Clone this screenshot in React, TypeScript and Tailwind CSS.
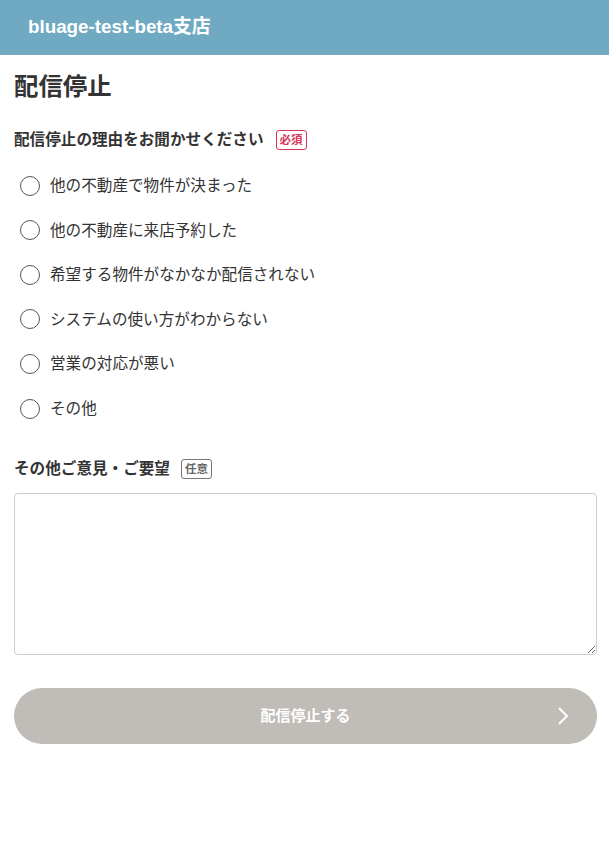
const reasons = [
  "他の不動産で物件が決まった",
  "他の不動産に来店予約した",
  "希望する物件がなかなか配信されない",
  "システムの使い方がわからない",
  "営業の対応が悪い",
  "その他",
];

export default function App() {
  return (
    <div className="min-h-screen bg-white text-[#333] font-['Liberation_Sans','Noto_Sans_CJK_JP',sans-serif]">
      {/* Header */}
      <header className="h-[55px] bg-[#6faac2] flex items-center px-[28px]">
        <h1 className="text-white font-bold text-[18.8px]">bluage-test-beta支店</h1>
      </header>

      <main className="pl-[14px] pr-[12px] pt-[16px]">
        <h2 className="text-[24.4px] font-bold leading-[32px]">配信停止</h2>

        {/* Reasons */}
        <div className="mt-[25px] flex items-center gap-[12px]">
          <span className="text-[15.6px] font-bold">配信停止の理由をお聞かせください</span>
          <span className="text-[11.5px] font-bold text-[#d6375a] border border-[#d6375a] rounded-[3px] px-[3px] leading-[18px]">
            必須
          </span>
        </div>

        <ul className="mt-[12px] flex flex-col">
          {reasons.map((r) => (
            <li key={r} className="h-[44.6px] flex items-center gap-[10px] pl-[6px]">
              <span className="w-[20px] h-[20px] rounded-full border border-[#555] bg-white" />
              <span className="text-[15.6px] text-[#333]">{r}</span>
            </li>
          ))}
        </ul>

        {/* Comments */}
        <div className="mt-[26px] flex items-center gap-[11px]">
          <span className="text-[15.6px] font-bold">その他ご意見・ご要望</span>
          <span className="text-[11.5px] font-bold text-[#666] border border-[#777] rounded-[3px] px-[3px] leading-[18px]">
            任意
          </span>
        </div>

        <textarea className="mt-[13px] block w-full h-[162px] border border-[#ccc] rounded-[4px] p-2 text-[15px] outline-none" />

        <button className="mt-[33px] relative w-full h-[56px] rounded-full bg-[#c0bcb7] text-white font-bold text-[15px] flex items-center justify-center">
          配信停止する
          <svg
            className="absolute right-[28px] top-1/2 -translate-y-1/2"
            width="12"
            height="20"
            viewBox="0 0 12 20"
            fill="none"
            stroke="white"
            strokeWidth="2"
          >
            <path d="M2 2l8 8-8 8" />
          </svg>
        </button>
      </main>
    </div>
  );
}
